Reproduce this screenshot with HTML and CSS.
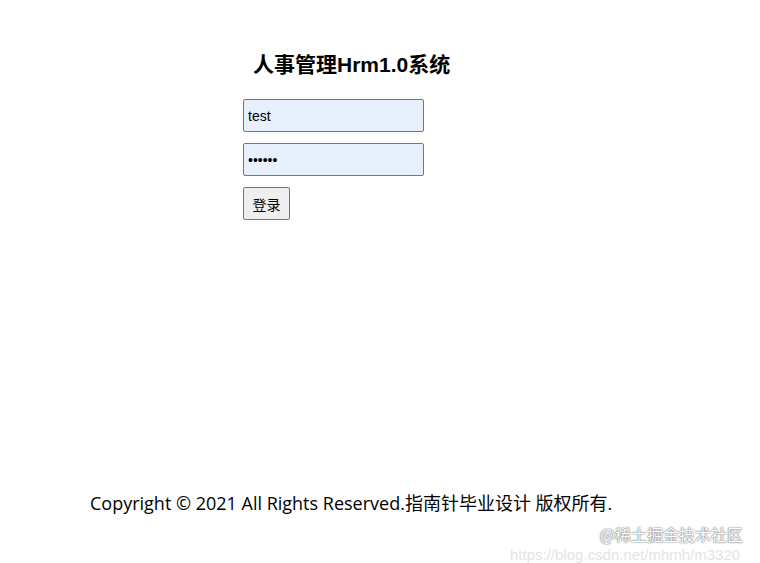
FILE: index.html
```html
<!DOCTYPE html>
<html lang="zh-CN">
<head>
    <meta charset="UTF-8">
    <title>人事管理Hrm1.0系统</title>
    <link rel="stylesheet" href="styles.css">
</head>
<body>
    <div class="login">
        <h2 class="title">人事管理Hrm1.0系统</h2>
        <form class="login-form">
            <input class="field" type="text" value="test">
            <input class="field" type="password" value="123456">
            <button class="btn" type="button">登录</button>
        </form>
    </div>

    <p class="copyright">Copyright © 2021 All Rights Reserved.指南针毕业设计 版权所有.</p>

    <div class="watermark">
        <span class="wm-brand">@稀土掘金技术社区</span>
        <span class="wm-url">https://blog.csdn.net/mhmh/m3320</span>
    </div>
</body>
</html>
```

FILE: styles.css
```css
body {
    margin: 0;
    font-family: "Liberation Sans", Arial, "Noto Sans CJK SC", sans-serif;
    background: #fff;
    color: #000;
    height: 563px;
    position: relative;
    overflow: hidden;
}

.login {
    padding: 51px 0 0 243px;
}

.title {
    margin: 0 0 20px 10px;
    font-size: 21px;
    font-weight: bold;
    line-height: 28px;
}

.login-form {
    display: flex;
    flex-direction: column;
    align-items: flex-start;
    gap: 11px;
}

.field {
    box-sizing: border-box;
    width: 181px;
    height: 33px;
    margin: 0;
    padding: 0 4px;
    border: 1px solid #767676;
    border-radius: 2px;
    background: #e8f0fe;
    font-family: "Liberation Sans", Arial, sans-serif;
    font-size: 14px;
    color: #000;
}

.btn {
    box-sizing: border-box;
    width: 47px;
    height: 33px;
    margin: 0;
    padding: 0;
    border: 1px solid #767676;
    border-radius: 2px;
    background: #efefef;
    font-family: "Noto Sans CJK SC", sans-serif;
    font-size: 14px;
    color: #000;
}

.copyright {
    position: absolute;
    top: 490px;
    left: 90px;
    margin: 0;
    font-family: "Open Sans", "Noto Sans CJK SC", sans-serif;
    font-size: 18px;
    line-height: 26px;
}

.watermark {
    position: absolute;
    left: 510px;
    top: 525px;
    width: 245px;
    display: flex;
    flex-direction: column;
    align-items: flex-end;
    gap: 3px;
}

.wm-brand {
    margin-right: 12px;
    font-family: "Noto Sans CJK SC", sans-serif;
    font-size: 16px;
    line-height: 18px;
    color: #fff;
    text-shadow: 0 0 2px #777, 0 0 1px #555;
    white-space: nowrap;
}

.wm-url {
    align-self: flex-start;
    font-family: "Liberation Sans", Arial, sans-serif;
    font-size: 15px;
    line-height: 17px;
    color: #e4e4e4;
    white-space: nowrap;
}
```
